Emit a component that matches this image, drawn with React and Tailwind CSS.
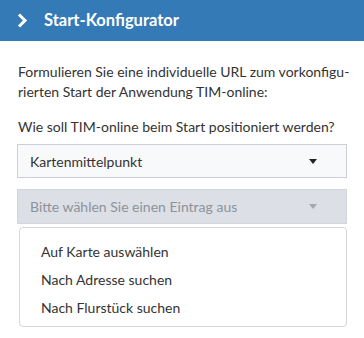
export default function App() {
  const items = ['Auf Karte auswählen', 'Nach Adresse suchen', 'Nach Flurstück suchen'];
  return (
    <div className="w-[364px] h-[338px] bg-white text-[#333] text-[14px]" style={{ fontFamily: 'Lato, "Noto Sans", sans-serif' }}>
      <div className="h-[41px] bg-[#337ab7] flex items-center pl-[17px] gap-[16px] text-white">
        <svg width="11" height="15" viewBox="0 0 11 15" fill="none">
          <path d="M2 1.5 L8 7.5 L2 13.5" stroke="white" strokeWidth="3" />
        </svg>
        <span className="text-[16.5px] font-bold">Start-Konfigurator</span>
      </div>
      <div className="px-[17px] pt-[21px]">
        <p className="leading-[20px] pl-px whitespace-nowrap">
          Formulieren Sie eine individuelle URL zum vorkonfigu-
          <br />
          rierten Start der Anwendung TIM-online:
        </p>
        <p className="mt-[15px] leading-[20px] pl-px whitespace-nowrap">Wie soll TIM-online beim Start positioniert werden?</p>
        <div className="mt-[7px] h-[34px] border border-[#ccd0d6] bg-[#f8f9fb] flex items-center justify-between pl-[12px] pr-[29px]">
          <span>Kartenmittelpunkt</span>
          <span className="w-0 h-0 border-l-[4px] border-r-[4px] border-t-[5px] border-l-transparent border-r-transparent border-t-[#222]" />
        </div>
        <div className="mt-[11px] h-[35px] border border-[#d2d6dc] bg-[#dcdfe5] flex items-center justify-between pl-[12px] pr-[29px] text-[#8d939b]">
          <span>Bitte wählen Sie einen Eintrag aus</span>
          <span className="w-0 h-0 border-l-[4px] border-r-[4px] border-t-[5px] border-l-transparent border-r-transparent border-t-[#a3a8ae]" />
        </div>
        <div className="mt-[3px] ml-[2px] h-[100px] border border-[#d6d6d6] rounded-[4px] bg-white flex flex-col pt-[9px] pl-[21px]">
          {items.map((t) => (
            <div key={t} className="h-[28px] flex items-center">{t}</div>
          ))}
        </div>
      </div>
    </div>
  );
}
